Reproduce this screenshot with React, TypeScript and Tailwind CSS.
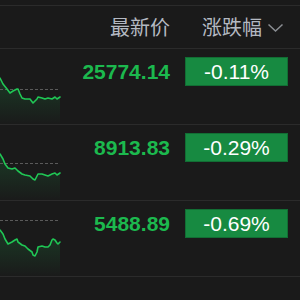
import React from "react";

type Row = {
  price: string;
  change: string;
  pts: [number, number][];
  base: number;
};

const rows: Row[] = [
  {
    price: "25774.14",
    change: "-0.11%",
    base: 40,
    pts: [[0,29],[3,35],[7,40],[10,44],[13,42],[17,40],[18,40],[20,45],[22,49],[25,50],[30,50],[33,54],[37,50],[38,48],[42,49],[45,50],[48,49],[52,50],[55,48],[57,50],[60,48]],
  },
  {
    price: "8913.83",
    change: "-0.29%",
    base: 38,
    pts: [[0,29],[3,34],[5,39],[8,43],[12,44],[15,43],[18,46],[22,49],[25,50],[30,51],[33,54],[35,55],[38,49],[42,49],[45,50],[48,51],[52,49],[55,48],[57,50],[60,48]],
  },
  {
    price: "5488.89",
    change: "-0.69%",
    base: 19,
    pts: [[0,29],[3,33],[5,38],[8,43],[12,41],[15,39],[17,38],[18,41],[22,44],[25,45],[28,48],[32,51],[33,54],[35,55],[37,51],[38,46],[42,45],[45,46],[48,46],[50,44],[52,39],[53,38],[55,39],[57,42],[58,43],[60,41]],
  },
];

function Spark({ pts, base, id }: { pts: [number, number][]; base: number; id: string }) {
  const line = pts.map((p, i) => `${i ? "L" : "M"}${p[0]},${p[1]}`).join(" ");
  const area = `${line} L60,76 L0,76 Z`;
  return (
    <svg width="62" height="76" viewBox="0 0 62 76" className="block shrink-0">
      <defs>
        <linearGradient id={id} x1="0" y1="0" x2="0" y2="1">
          <stop offset="0.3" stopColor="#1db954" stopOpacity="0.14" />
          <stop offset="1" stopColor="#1db954" stopOpacity="0" />
        </linearGradient>
      </defs>
      <path d={area} fill={`url(#${id})`} />
      <line x1="0" y1={base + 0.5} x2="60" y2={base + 0.5} stroke="#5a5a5a" strokeWidth="1" strokeDasharray="3 2" />
      <path d={line} fill="none" stroke="#20c755" strokeWidth="1.6" strokeLinejoin="round" strokeLinecap="round" />
    </svg>
  );
}

export default function App() {
  return (
    <div className="w-[300px] h-[300px] bg-[#1a1a1a] overflow-hidden pt-[5px]">
      <div className="h-[44px] border-y border-[#2b2b2b] flex items-center">
        <div className="w-[62px] shrink-0" />
        <div
          className="flex-1 text-right text-[20px] text-[#b4b9c2]"
          style={{ fontFamily: '"Noto Sans CJK SC", sans-serif' }}
        >
          最新价
        </div>
        <div
          className="w-[103px] ml-[15px] mr-[12px] flex items-center pl-[17px] text-[20px] text-[#b4b9c2]"
          style={{ fontFamily: '"Noto Sans CJK SC", sans-serif' }}
        >
          <span>涨跌幅</span>
          <svg width="17" height="10" viewBox="0 0 17 10" className="ml-[5px] mt-[2px]">
            <path d="M1.5 1.5 L8.5 8 L15.5 1.5" fill="none" stroke="#8a8d92" strokeWidth="1.5" />
          </svg>
        </div>
      </div>
      {rows.map((r, i) => (
        <div key={i} className="h-[76px] border-b border-[#2b2b2b] flex items-start">
          <Spark pts={r.pts} base={r.base} id={`g${i}`} />
          <div
            className="flex-1 text-right text-[21px] font-bold text-[#1cb94e] pt-[10px] leading-[25px]"
            style={{ fontFamily: '"Liberation Sans", Arial, sans-serif' }}
          >
            {r.price}
          </div>
          <div
            className="w-[103px] h-[29px] ml-[15px] mr-[12px] mt-[8px] bg-[#178a41] border border-[#126e34] flex items-center justify-center text-white text-[21px]"
            style={{ fontFamily: '"Liberation Sans", Arial, sans-serif' }}
          >
            {r.change}
          </div>
        </div>
      ))}
    </div>
  );
}
